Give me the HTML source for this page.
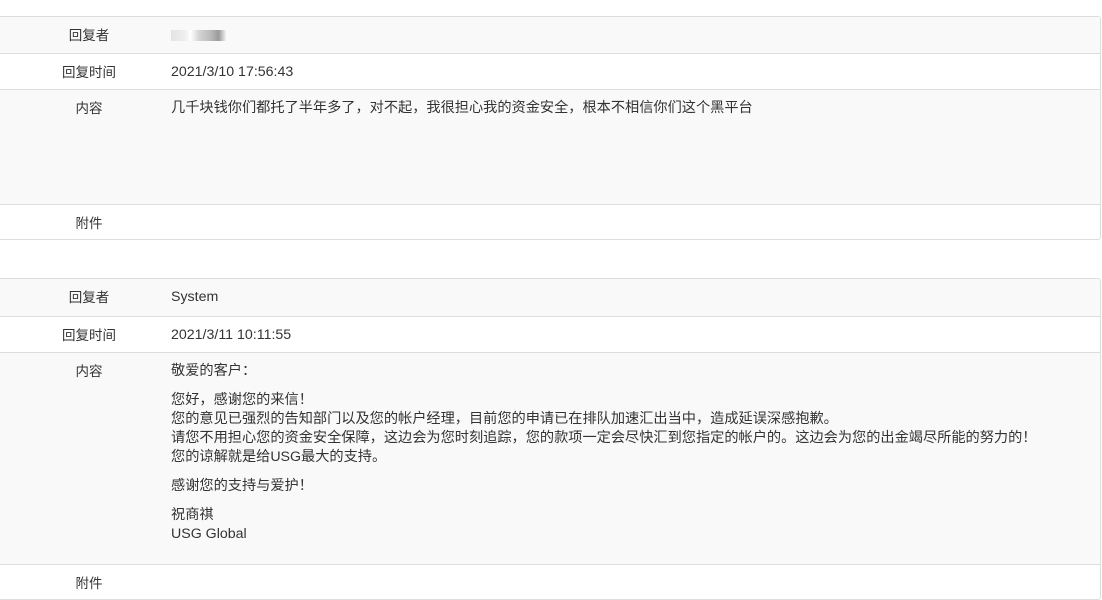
<!DOCTYPE html>
<html><head><meta charset="utf-8"><style>
body{margin:0;background:#fff;font-family:"Liberation Sans","Noto Sans CJK SC",sans-serif;font-size:14px;color:#333;}
.t{position:absolute;left:-4px;width:1105px;border:1px solid #ddd;border-radius:3px;box-sizing:border-box;overflow:hidden;}
.r{display:flex;border-top:1px solid #ddd;box-sizing:border-box;}
.r:first-child{border-top:none}
.g{background:#f9f9f9}
.l{width:184px;text-align:center;padding-top:9px;flex:none;line-height:19px;font-size:13.5px}
.v{padding-top:9px;margin-left:-10px;line-height:19px;font-size:14.2px}
.v p{margin:0 0 10px}
</style></head><body>
<div class="t" style="top:16px;height:224px">
 <div class="r g" style="height:36px"><div class="l">回复者</div><div class="v"><span style="display:inline-block;width:56px;height:11px;margin-top:4px;background:linear-gradient(90deg,#e4e4e4,#eee 25%,#fff 35%,#d4d4d4 50%,#bbb 70%,#999 85%,#fff)"></span></div></div>
 <div class="r" style="height:36px"><div class="l">回复时间</div><div class="v">2021/3/10 17:56:43</div></div>
 <div class="r g" style="height:115px"><div class="l">内容</div><div class="v">几千块钱你们都托了半年多了，对不起，我很担心我的资金安全，根本不相信你们这个黑平台</div></div>
 <div class="r" style="height:36px"><div class="l">附件</div><div class="v"></div></div>
</div>
<div class="t" style="top:278px;height:322px">
 <div class="r g" style="height:37px"><div class="l">回复者</div><div class="v">System</div></div>
 <div class="r" style="height:36px"><div class="l">回复时间</div><div class="v">2021/3/11 10:11:55</div></div>
 <div class="r g" style="height:212px"><div class="l">内容</div><div class="v">
 <p>敬爱的客户：</p>
 <p>您好，感谢您的来信！<br>您的意见已强烈的告知部门以及您的帐户经理，目前您的申请已在排队加速汇出当中，造成延误深感抱歉。<br>请您不用担心您的资金安全保障，这边会为您时刻追踪，您的款项一定会尽快汇到您指定的帐户的。这边会为您的出金竭尽所能的努力的！<br>您的谅解就是给USG最大的支持。</p>
 <p>感谢您的支持与爱护！</p>
 <p>祝商祺<br>USG Global</p>
 </div></div>
 <div class="r" style="height:36px"><div class="l">附件</div><div class="v"></div></div>
</div>
</body></html>
